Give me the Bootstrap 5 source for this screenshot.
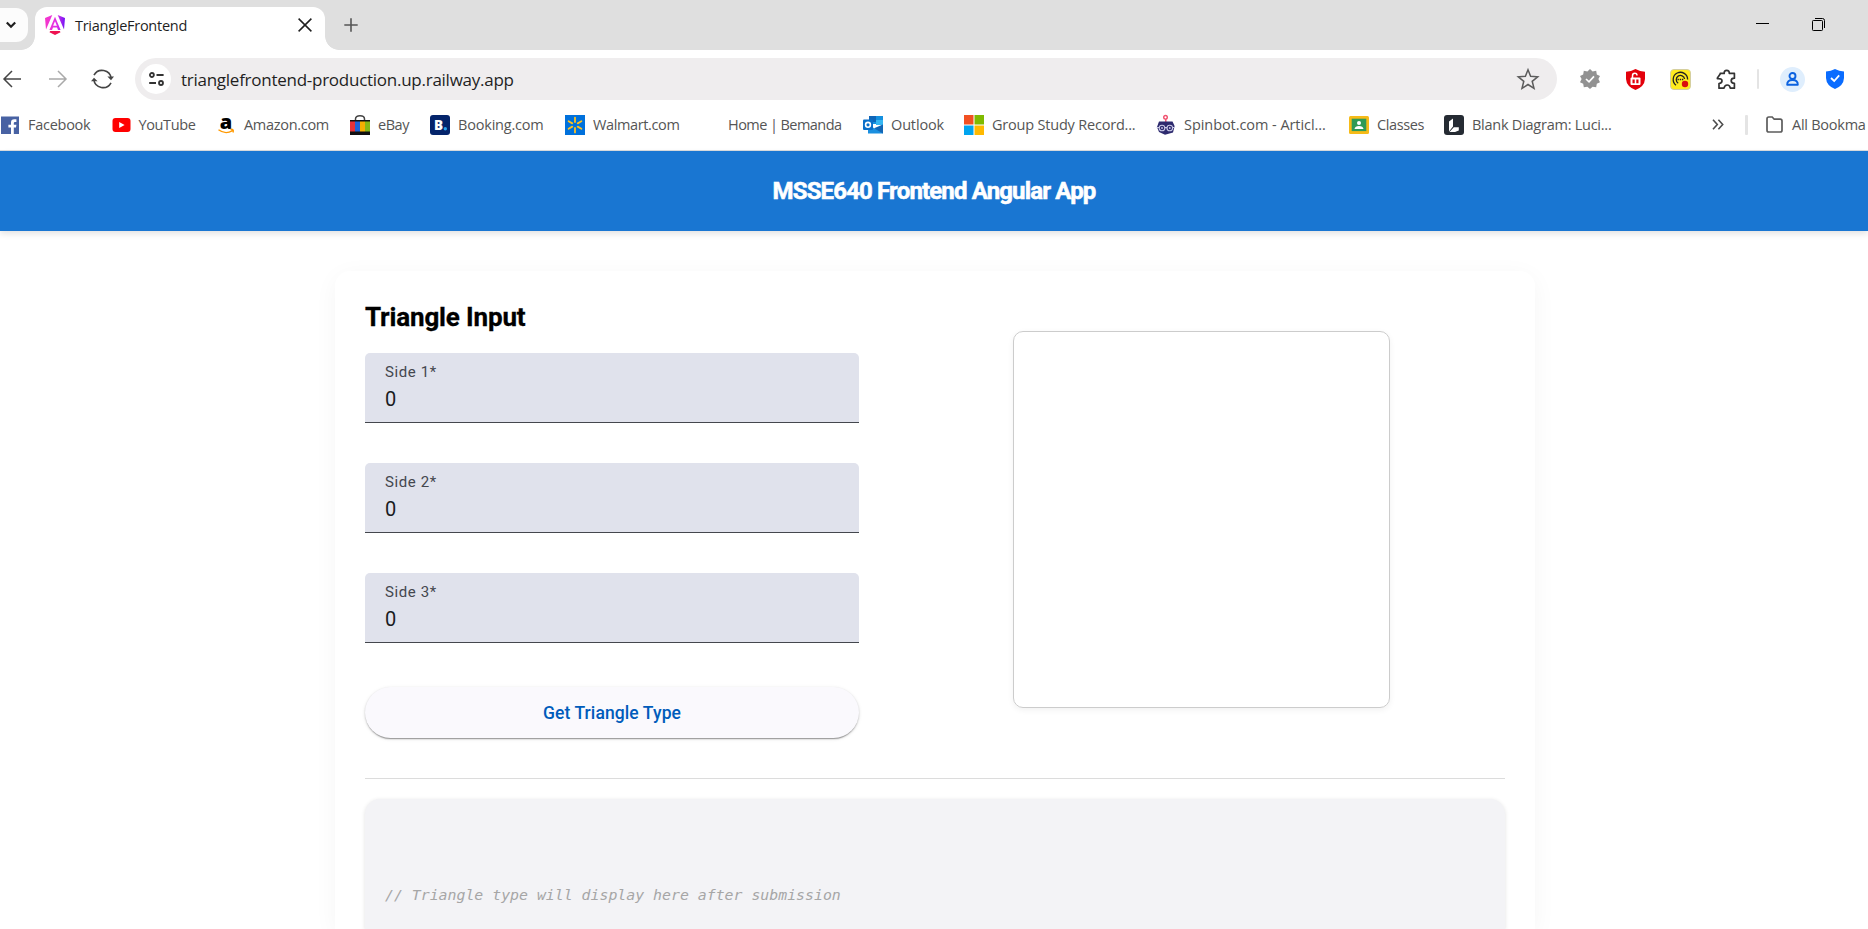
<!doctype html>
<html lang="en">
<head>
<meta charset="utf-8">
<title>TriangleFrontend</title>
<link href="https://cdn.jsdelivr.net/npm/bootstrap@5.3.0/dist/css/bootstrap.min.css" rel="stylesheet">
<style>
  body { font-family: "Open Sans", "Noto Sans", sans-serif; background: #fff; height: 929px; overflow: hidden; }
  svg { display: block; flex: none; overflow: visible; }

  /* tab strip */
  .tab-strip { height: 50px; background: #dfdfdf; }
  .tab-search { width: 28px; height: 34px; margin-top: 8px; background: #fcfcfc; border-radius: 0 12px 12px 0; }
  .tab-foot { width: 14px; height: 14px; flex: none; }
  .foot-left { margin-left: -7px; background: radial-gradient(circle at 0 0, transparent 13.5px, #fff 14.2px); }
  .foot-right { background: radial-gradient(circle at 100% 0, transparent 13.5px, #fff 14.2px); }
  .open-tab { width: 290px; height: 43px; background: #fff; border-radius: 12px 12px 0 0; padding: 0 13px 7px 10px; }
  .tab-title { font-size: 14.5px; letter-spacing: -.27px; color: #1f1f1f; margin-left: 10px; padding-top: 2px; }

  /* toolbar */
  .toolbar-row { height: 50px; padding-top: 8px; }
  .omnibox { width: 1422px; height: 42px; border-radius: 21px; background: #efedee; padding: 0 18px 0 6px; }
  .site-info { width: 30px; height: 30px; border-radius: 50%; background: #fff; }
  .url-text { font-size: 17px; letter-spacing: -.26px; color: #1f1f1f; margin-left: 10px; padding-top: 1px; }
  .v-sep { width: 2.5px; height: 20px; background: #e4e4e4; border-radius: 1px; }
  .avatar { width: 25px; height: 25px; border-radius: 50%; background: #dfeefd; }

  /* bookmarks */
  .bookmarks { height: 51px; border-bottom: 1px solid #d9dcdf; padding-bottom: 1px; color: #555; font-size: 14.5px; }
  .bm-item { gap: 8px; flex: none; }
  .bm-more { flex: 1 1 0; min-width: 0; overflow: hidden; }
  .bm-item span, .bm-more span { white-space: nowrap; }

  /* application */
  .app { font-family: Roboto, sans-serif; }
  .app-header { height: 80px; background: #1976d2; box-shadow: 0 2.5px 6px rgba(0,0,0,.11); }
  .app-header h1 { font-size: 24px; font-weight: 700; letter-spacing: -.85px; color: #fff; padding-top: 1px; -webkit-text-stroke: .55px #fff; }
  .app-card { width: 1200px; height: 658px; margin: 40px 0 0 335px; padding: 30px 30px 0; border-radius: 15px 15px 0 0; box-shadow: 0 5px 25px rgba(0,0,0,.045); }
  .form-col { width: 494px; }
  .form-col h2 { font-size: 26px; font-weight: 700; letter-spacing: -.15px; line-height: 32px; height: 52px; color: #000; -webkit-text-stroke: .3px #000; }
  .side-field { height: 70px; margin-bottom: 40px; padding: 9px 20px 0; background: #e0e2ec; border-bottom: 1px solid #44474e; border-radius: 5px 5px 0 0; }
  .side-field label { font-size: 15px; letter-spacing: .6px; line-height: 20px; color: #44474e; }
  .side-field input { height: 33px; font-size: 20px; color: #1a1b1f; background: none; border: 0; outline: 0; padding: 1px 0 0; }
  .submit-btn { height: 51px; margin-top: 4px; padding: 8px 0 6px; border-radius: 26px; background: #faf9fd; color: #005cbb; font-size: 17.5px; font-weight: 500; letter-spacing: .1px; border: 0; box-shadow: 0 2px 1px -1px rgba(0,0,0,.25), 0 1px 2px rgba(0,0,0,.2), 0 1px 4px rgba(0,0,0,.08); }
  .preview-col { width: 607px; padding-top: 30px; }
  .preview-box { width: 377px; height: 377px; border: 1px solid #ccc; border-radius: 10px; box-shadow: 0 2px 6px rgba(0,0,0,.06); }
  .rule { height: 1px; background: #dcdcdc; margin: 40px 0 20px; }
  .result-box { height: 130px; background: #f3f3f6; border-radius: 15px 15px 0 0; padding: 85px 20px 0; box-shadow: 0 1px 4px rgba(0,0,0,.12); font: italic 14.85px/22px "DejaVu Sans Mono", monospace; color: #a6a6a6; }
</style>
</head>
<body>
<header>
  <div class="tab-strip d-flex align-items-start">
    <div class="tab-search d-flex align-items-center">
      <svg width="10" height="8" viewBox="0 0 10 8" style="margin-left:6px"><path d="M.8 1.5 5 5.8 9.2 1.5" fill="none" stroke="#1f1f1f" stroke-width="2.2"/></svg>
    </div>
    <div class="align-self-end d-flex align-items-end">
      <div class="tab-foot foot-left"></div>
      <div class="open-tab d-flex align-items-center">
        <svg width="20" height="20" viewBox="0 0 20 20">
          <defs><linearGradient id="ng" gradientUnits="userSpaceOnUse" x1="0" y1="4" x2="20" y2="4"><stop offset="0" stop-color="#f637c8"/><stop offset=".6" stop-color="#e02fe8"/><stop offset="1" stop-color="#6d14f5"/></linearGradient></defs>
          <path d="M0 3 7.3 0 1 14.5zM12.7 0 20 3 19 14.5zM10 1.8 15.6 15H13l-1-2.5H8L7 15H4.4z" fill="url(#ng)"/><path d="M10 6.2 11.9 10.8H8.1z" fill="#fff"/><path d="M5.2 16H14.8l.7 1.3L10 20 4.5 17.3z" fill="#ee1250"/>
        </svg>
        <span class="tab-title">TriangleFrontend</span>
        <svg class="ms-auto" width="14" height="14" viewBox="0 0 14 14"><path d="M.6.6 13.4 13.4M13.4.6.6 13.4" stroke="#1f1f1f" stroke-width="1.5"/></svg>
      </div>
      <div class="tab-foot foot-right"></div>
    </div>
    <svg width="14" height="14" viewBox="0 0 14 14" style="margin:18px 0 0 5px"><path d="M7 .3V13.7M.3 7H13.7" stroke="#555" stroke-width="1.6"/></svg>
    <div class="ms-auto d-flex" style="padding:17px 42px 0 0;gap:43px">
      <svg width="13" height="14" viewBox="0 0 13 14"><path d="M0 6.5H13" stroke="#000" stroke-width="1"/></svg>
      <svg width="14" height="14" viewBox="0 0 14 14"><rect x=".5" y="3.5" width="10" height="10" rx=".8" fill="none" stroke="#000"/><path d="M3 1.5H10.5Q12.5 1.5 12.5 3.5V11" fill="none" stroke="#000"/></svg>
    </div>
  </div>

  <div class="toolbar-row d-flex align-items-center">
    <svg width="18" height="18" viewBox="0 0 18 18" style="margin-left:3px"><path d="M18 9H1M9 1 1 9 9 17" fill="none" stroke="#454545" stroke-width="1.5"/></svg>
    <svg width="18" height="18" viewBox="0 0 18 18" style="margin-left:27.5px"><path d="M0 9H17M9 1 17 9 9 17" fill="none" stroke="#a9a9a9" stroke-width="1.5"/></svg>
    <svg width="23" height="20" viewBox="0 0 23 20" style="margin:0 21px 0 24.5px"><path d="M3 6.2A9.2 9.2 0 0 1 20.2 9.5M20 13.8A9.2 9.2 0 0 1 2.8 10.5" fill="none" stroke="#454545" stroke-width="1.6"/><path d="M16.4 7.6H23L20 11.3zM0 12.3 3 8.8 6.6 12.3z" fill="#454545"/></svg>
    <div class="omnibox d-flex align-items-center">
      <div class="site-info d-flex align-items-center justify-content-center">
        <svg width="15" height="14" viewBox="0 0 15 14" fill="none" stroke="#333" stroke-width="1.8"><circle cx="2.9" cy="3" r="2"/><path d="M7.5 3H14.6M.2 11H7"/><circle cx="12" cy="11" r="2"/></svg>
      </div>
      <span class="url-text">trianglefrontend-production.up.railway.app</span>
      <svg class="ms-auto" width="22" height="22" viewBox="0 0 22 22"><path d="M11 1.8 13.6 8.3 20.7 8.8 15.2 13.3 17 20.3 11 16.5 5 20.3 6.8 13.3 1.3 8.8 8.4 8.3z" fill="none" stroke="#5c5c5c" stroke-width="1.5"/></svg>
    </div>
    <svg width="20" height="20" viewBox="0 0 20 20" style="margin-left:23px"><path d="M10 0 12.6 2.4 16.2 1.8 16.8 5.4 20 7 18.4 10 20 13.2 16.8 14.8 16.2 18.3 12.6 17.7 10 20 7.4 17.7 3.8 18.3 3.2 14.8 0 13.2 1.6 10 0 7 3.2 5.4 3.8 1.8 7.4 2.4z" fill="#929292"/><path d="M6 10 9 12.8 14 7.4" fill="none" stroke="#fff" stroke-width="1.7"/></svg>
    <svg width="19" height="21" viewBox="0 0 19 21" style="margin-left:26px"><path d="M9.5 0Q14 2.6 19 2.7V10Q18.5 17.5 9.5 21 .5 17.5 0 10V2.7Q5 2.6 9.5 0z" fill="#e3000b"/><path d="M6.5 9V6.7Q6.5 4.3 8.8 4.3 11 4.3 11 6.5" fill="none" stroke="#fff" stroke-width="1.5"/><rect x="4.5" y="8.6" width="10" height="7.4" rx="1" fill="#fff"/><path d="M6.5 10.4H8.7V14.2H6.5zM10.3 10.4H12.5V14.2H10.3z" fill="#e3000b"/></svg>
    <svg width="21" height="21" viewBox="0 0 21 21" style="margin-left:25px"><rect x=".5" y=".5" width="20" height="20" rx="3.5" fill="#ffeb1f" stroke="#d5cfa0"/><path d="M6 16.2A7.2 7.2 0 1 1 17.6 10.5M8.2 14.2A4.2 4.2 0 1 1 14.6 10" fill="none" stroke="#222" stroke-width="1.3"/><path d="M7.5 10.5H13.5" stroke="#222" stroke-width="1.4" stroke-dasharray="1.4 .8"/><circle cx="15" cy="15" r="3.2" fill="#d90d0d"/></svg>
    <svg width="20" height="20" viewBox="0 0 20 20" style="margin-left:24.5px"><path d="M3 19.2V14.6Q6 14.2 6 11.8 6 9.4 1.4 9.6V9L4.2 5V4.4H8.2Q8 1.4 10.7 1.4 13.4 1.4 13.3 4.4H18.4V9.2Q15.2 9.2 15.2 11.7 15.2 14.2 18.4 14.4V19.2H14.3Q13.8 16 11.2 16 8.6 16 8 19.2z" fill="none" stroke="#333" stroke-width="1.7" stroke-linejoin="round"/></svg>
    <div class="v-sep" style="margin-left:21px"></div>
    <div class="avatar d-flex align-items-center justify-content-center" style="margin-left:20.5px">
      <svg width="13" height="14" viewBox="0 0 13 14" fill="none" stroke="#0b62e0" stroke-width="1.9"><circle cx="6.5" cy="4" r="3"/><path d="M1.2 12.8Q1 8 6.5 8 12 8 11.8 12.8z" stroke-linejoin="round"/></svg>
    </div>
    <svg width="18" height="20" viewBox="0 0 18 20" style="margin-left:21px"><path d="M9 0Q13 2.4 18 2.6V9Q17.6 16.6 9 20 .4 16.6 0 9V2.6Q5 2.4 9 0z" fill="#0a6cff"/><path d="M5 9 8.2 12 13.2 6.4" fill="none" stroke="#fff" stroke-width="1.8"/></svg>
  </div>

  <nav class="bookmarks d-flex align-items-center overflow-hidden">
    <div class="bm-item d-flex align-items-center" style="width:110.5px">
      <svg width="20" height="20" viewBox="0 0 20 20"><rect x="1" y="1.5" width="18" height="17.5" fill="#4862a3"/><path d="M11 19V12.5H8.4V9.7H11V7.5Q11 4.3 14.2 4.3H16.4V7H15Q13.8 7 13.8 8V9.7H16.4L16 12.5H13.8V19z" fill="#fff"/></svg>
      <span style="letter-spacing:-.27px">Facebook</span></div>
    <div class="bm-item d-flex align-items-center" style="width:105.5px">
      <svg width="20" height="20" viewBox="0 0 20 20"><rect x="1.5" y="3" width="18" height="14" rx="3" fill="#f00"/><path d="M8.2 7V13L13.6 10z" fill="#fff"/></svg>
      <span style="letter-spacing:-.37px">YouTube</span></div>
    <div class="bm-item d-flex align-items-center" style="width:134px">
      <svg width="20" height="20" viewBox="0 0 20 20"><text x="10" y="13.5" text-anchor="middle" font-family="Open Sans" font-weight="800" font-size="20" fill="#000">a</text><path d="M2.5 14.8Q9.5 20 16.4 15.6M14.5 14.3Q18.3 14 17 17.5" fill="none" stroke="#f90" stroke-width="1.4"/></svg>
      <span style="letter-spacing:-.3px">Amazon.com</span></div>
    <div class="bm-item d-flex align-items-center" style="width:80px">
      <svg width="20" height="20" viewBox="0 0 20 20"><path d="M5.5 6V4Q5.5.8 10 .8 14.5.8 14.5 4V6" fill="none" stroke="#444" stroke-width="1.5"/><path d="M0 5H20V20H0z" fill="#111"/><path d="M0 6.5H5V16.5H0z" fill="#e53238"/><path d="M5 6.5H10V16.5H5z" fill="#1d63d8"/><path d="M10 6.5H15V16.5H10z" fill="#f5af02"/><path d="M15 6.5H20V16.5H15z" fill="#86b817"/></svg>
      <span style="letter-spacing:-.45px">eBay</span></div>
    <div class="bm-item d-flex align-items-center" style="width:135px">
      <svg width="20" height="20" viewBox="0 0 20 20"><rect width="20" height="20" rx="3" fill="#04246b"/><text x="4" y="15" font-family="Open Sans" font-weight="800" font-size="13.5" fill="#fff">B</text><circle cx="15.3" cy="13.7" r="1.7" fill="#2ba6f0"/></svg>
      <span style="letter-spacing:-.2px">Booking.com</span></div>
    <div class="bm-item d-flex align-items-center" style="width:163px">
      <svg width="20" height="20" viewBox="0 0 20 20"><rect width="20" height="20" fill="#0071dc"/><path d="M10 2.6V7M10 13V17.4M3.6 6.3 7.3 8.4M12.7 11.6 16.4 13.7M16.4 6.3 12.7 8.4M7.3 11.6 3.6 13.7" stroke="#ffc220" stroke-width="1.8" stroke-linecap="round"/></svg>
      <span style="letter-spacing:-.37px">Walmart.com</span></div>
    <div class="bm-item d-flex align-items-center" style="width:135px">
      <span style="letter-spacing:-.56px">Home | Bemanda</span></div>
    <div class="bm-item d-flex align-items-center" style="width:101px">
      <svg width="20" height="20" viewBox="0 0 20 20"><path d="M6 1H20V9H6z" fill="#1490df"/><path d="M6 1H13V7H6z" fill="#0f66b8"/><path d="M13 5H20V10H13z" fill="#35b6f2"/><path d="M5 9.5 12.5 14 20 9.5V18.5H5z" fill="#1a8fe0"/><path d="M20 9.5V18.5L11 13.2z" fill="#1266b5"/><rect y="4.5" width="10" height="10.5" rx="1" fill="#0a6fc9"/><circle cx="5" cy="9.8" r="2.4" fill="none" stroke="#fff" stroke-width="1.6"/></svg>
      <span style="letter-spacing:-.15px">Outlook</span></div>
    <div class="bm-item d-flex align-items-center" style="width:192px">
      <svg width="20" height="20" viewBox="0 0 20 20"><path d="M0 0H9.5V9.5H0z" fill="#f25022"/><path d="M10.5 0H20V9.5H10.5z" fill="#7fba00"/><path d="M0 10.5H9.5V20H0z" fill="#00a4ef"/><path d="M10.5 10.5H20V20H10.5z" fill="#ffb900"/></svg>
      <span style="letter-spacing:-.2px">Group Study Record...</span></div>
    <div class="bm-item d-flex align-items-center" style="width:193px">
      <svg width="20" height="20" viewBox="0 0 20 20"><circle cx="9.5" cy="2.3" r="1.8" fill="none" stroke="#f0506e" stroke-width="1.4"/><path d="M9.8 4V7" stroke="#f0506e" stroke-width="1.4"/><path d="M3 6.5H16.5L18.6 11 17 17.5 9 19.8 3 17 1 12z" fill="#2d2a6e"/><g fill="none" stroke="#c9c9e6" stroke-width="1.1"><circle cx="6" cy="13" r="2.8"/><circle cx="13.8" cy="13" r="2.8"/><path d="M8.8 12.6H11M.6 12.5H3M16.6 12.5H19"/></g><circle cx="6" cy="13" r=".9" fill="#c9c9e6"/><circle cx="13.8" cy="13" r=".9" fill="#c9c9e6"/></svg>
      <span style="letter-spacing:-.06px">Spinbot.com - Articl...</span></div>
    <div class="bm-item d-flex align-items-center" style="width:95px">
      <svg width="20" height="20" viewBox="0 0 20 20"><rect y="1" width="20" height="18" rx="1.5" fill="#f6bb18"/><rect x="2.7" y="3.7" width="14.6" height="12.4" fill="#2f9a55"/><circle cx="10" cy="8" r="2" fill="#fff"/><path d="M5.5 14Q6 11 10 11 14 11 14.5 14z" fill="#fff"/></svg>
      <span style="letter-spacing:-.38px">Classes</span></div>
    <div class="bm-item d-flex align-items-center" style="width:267.5px">
      <svg width="20" height="20" viewBox="0 0 20 20"><rect width="20" height="20" rx="3" fill="#252b33"/><path d="M5 6.5 9 3.5V11.5L5 16.5zM5.5 17 9.8 12.2H14.8V15.5L11 17z" fill="#fff"/></svg>
      <span style="letter-spacing:-.25px">Blank Diagram: Luci...</span></div>
    <svg width="12" height="11" viewBox="0 0 12 11"><path d="M1 .8 5.3 5.5 1 10.2M6.4.8 10.7 5.5 6.4 10.2" fill="none" stroke="#4d4d4d" stroke-width="1.6"/></svg>
    <div class="v-sep" style="margin-left:21.5px"></div>
    <div class="bm-more d-flex align-items-center" style="margin-left:18.5px;gap:9px">
      <svg width="17" height="17" viewBox="0 0 17 17"><path d="M1 2.8Q1 1 2.8 1H6.2L8.2 3.2H14.2Q16 3.2 16 5V14.2Q16 16 14.2 16H2.8Q1 16 1 14.2z" fill="none" stroke="#5c5c5c" stroke-width="1.7"/></svg>
      <span style="letter-spacing:-.25px">All Bookma</span></div>
  </nav>
</header>

<main class="app">
  <div class="app-header d-flex align-items-center justify-content-center"><h1 class="m-0">MSSE640 Frontend Angular App</h1></div>
  <div class="app-card">
    <div class="d-flex justify-content-between">
      <form class="form-col">
        <h2 class="m-0">Triangle Input</h2>
        <div class="side-field"><label class="d-block" for="s1">Side 1*</label><input class="d-block w-100" id="s1" value="0"></div>
        <div class="side-field"><label class="d-block" for="s2">Side 2*</label><input class="d-block w-100" id="s2" value="0"></div>
        <div class="side-field"><label class="d-block" for="s3">Side 3*</label><input class="d-block w-100" id="s3" value="0"></div>
        <button type="button" class="btn submit-btn w-100">Get Triangle Type</button>
      </form>
      <div class="preview-col d-flex justify-content-center"><div class="preview-box"></div></div>
    </div>
    <div class="rule"></div>
    <div class="result-box">// Triangle type will display here after submission</div>
  </div>
</main>
<script src="https://cdn.jsdelivr.net/npm/bootstrap@5.3.0/dist/js/bootstrap.bundle.min.js"></script>
</body>
</html>
